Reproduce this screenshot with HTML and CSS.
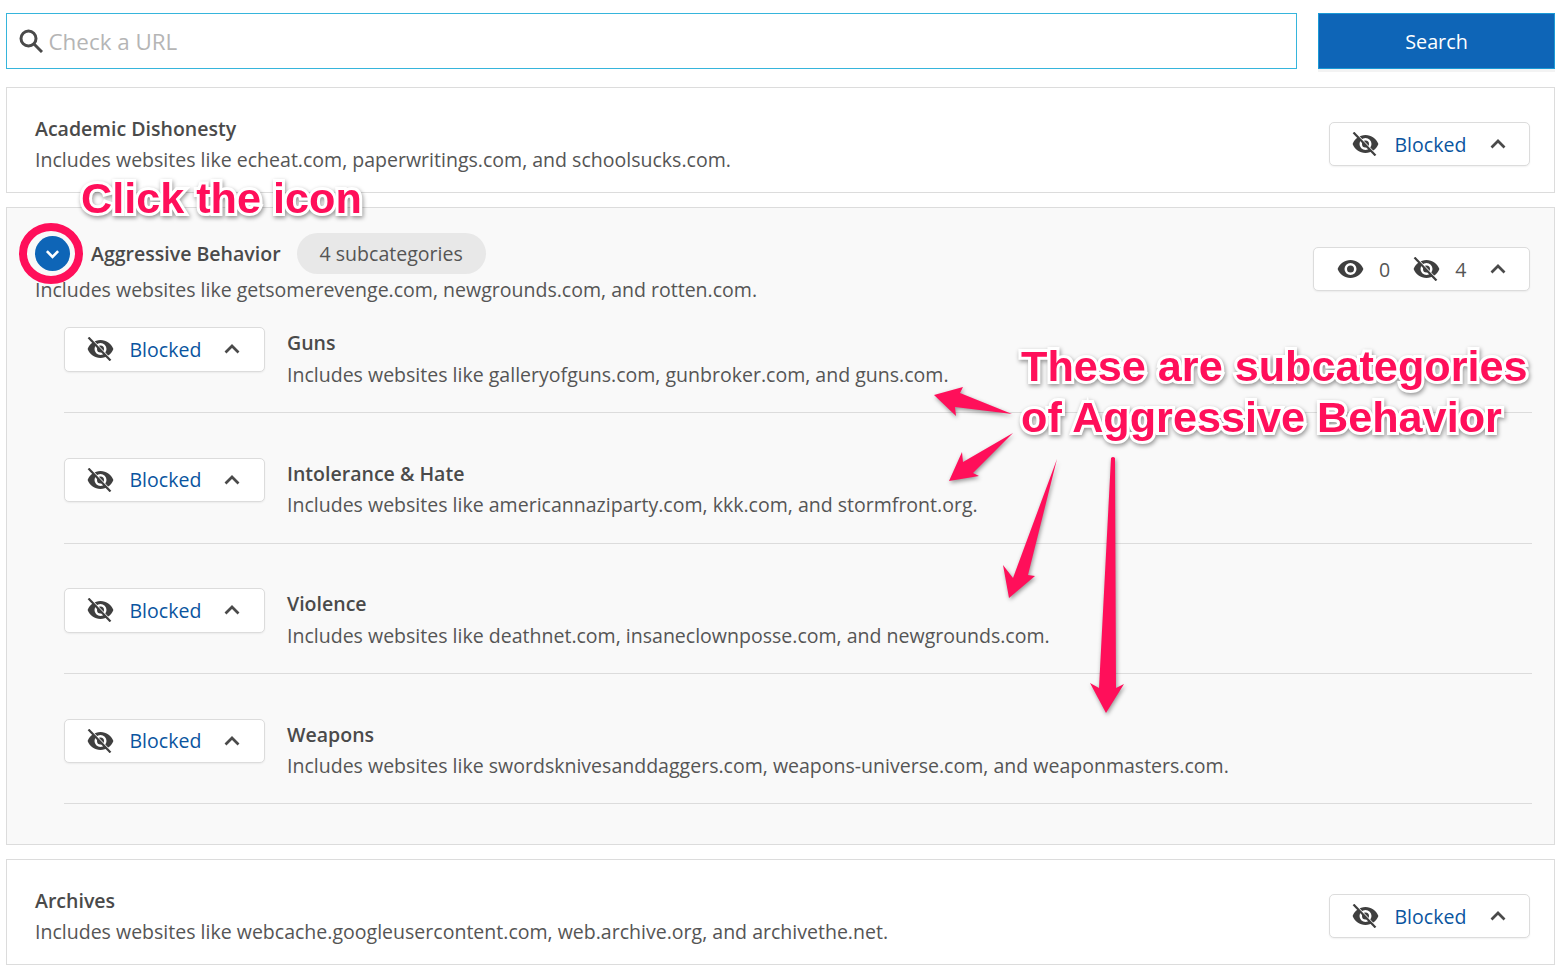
FILE: index.html
```html
<!DOCTYPE html>
<html lang="en">
<head>
    <meta charset="UTF-8">
    <meta name="viewport" content="width=device-width, initial-scale=1.0">
    <title>Category filters</title>
    <link rel="stylesheet" href="styles.css">
</head>
<body>

    <svg class="icon-defs" width="0" height="0" aria-hidden="true">
        <symbol id="eye" viewBox="0 0 27 20">
            <path fill-rule="evenodd" d="M13.500 1C7.600 1 2.800 4.600.6 10c2.200 5.400 7 9 12.900 9s10.700-3.600 12.900-9C24.200 4.600 19.400 1 13.500 1zm0 15a6 6 0 1 1 0-12 6 6 0 0 1 0 12zm0-9.500a3.500 3.500 0 1 0 0 7 3.500 3.500 0 0 0 0-7z"/>
        </symbol>
        <symbol id="eye-off" viewBox="0 0 27 24">
            <path fill-rule="evenodd" d="M13.500 3C7.600 3 2.800 6.600.6 12c2.200 5.400 7 9 12.900 9s10.700-3.600 12.900-9C24.200 6.600 19.400 3 13.500 3zm0 15a6 6 0 1 1 0-12 6 6 0 0 1 0 12zm0-9.500a3.500 3.500 0 1 0 0 7 3.500 3.500 0 0 0 0-7z"/>
            <path class="slash-gap" d="M3 0.500 24 22.500"/>
            <path class="slash" d="M1.500 0.500 23.500 23.500"/>
        </symbol>
        <symbol id="chevron" viewBox="0 0 16 10">
            <path d="M1.500 8.500 8 2l6.500 6.500" fill="none" stroke="currentColor" stroke-width="2.700"/>
        </symbol>
    </svg>

    <div class="search-row">
        <div class="search-box">
            <svg class="search-icon" viewBox="0 0 24 24"><circle cx="9.500" cy="9.500" r="7.500"/><path d="M15 15l8 8"/></svg>
            <input type="text" placeholder="Check a URL">
        </div>
        <button class="search-btn">Search</button>
    </div>

    <div class="card">
        <div class="card-text">
            <h3>Academic Dishonesty</h3>
            <p>Includes websites like echeat.com, paperwritings.com, and schoolsucks.com.</p>
        </div>
        <div class="status-btn">
            <svg class="eye-icon"><use href="#eye-off"/></svg>
            <span class="status-label">Blocked</span>
            <svg class="chevron-icon"><use href="#chevron"/></svg>
        </div>
    </div>

    <div class="card card-open">
        <div class="open-head">
            <div class="card-text">
                <div class="title-row">
                    <span class="toggle"><svg viewBox="0 0 16 10"><path d="M2 2l6 6 6-6"/></svg></span>
                    <h3>Aggressive Behavior</h3>
                    <span class="pill">4 subcategories</span>
                </div>
                <p>Includes websites like getsomerevenge.com, newgrounds.com, and rotten.com.</p>
            </div>
            <div class="status-btn counts-btn">
                <svg class="eye-icon eye-on"><use href="#eye"/></svg>
                <span class="count">0</span>
                <svg class="eye-icon"><use href="#eye-off"/></svg>
                <span class="count">4</span>
                <svg class="chevron-icon"><use href="#chevron"/></svg>
            </div>
        </div>

        <div class="sub-row">
            <div class="status-btn sub-btn">
                <svg class="eye-icon"><use href="#eye-off"/></svg>
                <span class="status-label">Blocked</span>
                <svg class="chevron-icon"><use href="#chevron"/></svg>
            </div>
            <div class="card-text">
                <h3>Guns</h3>
                <p>Includes websites like galleryofguns.com, gunbroker.com, and guns.com.</p>
            </div>
        </div>
        <div class="sub-row">
            <div class="status-btn sub-btn">
                <svg class="eye-icon"><use href="#eye-off"/></svg>
                <span class="status-label">Blocked</span>
                <svg class="chevron-icon"><use href="#chevron"/></svg>
            </div>
            <div class="card-text">
                <h3>Intolerance &amp; Hate</h3>
                <p>Includes websites like americannaziparty.com, kkk.com, and stormfront.org.</p>
            </div>
        </div>
        <div class="sub-row">
            <div class="status-btn sub-btn">
                <svg class="eye-icon"><use href="#eye-off"/></svg>
                <span class="status-label">Blocked</span>
                <svg class="chevron-icon"><use href="#chevron"/></svg>
            </div>
            <div class="card-text">
                <h3>Violence</h3>
                <p>Includes websites like deathnet.com, insaneclownposse.com, and newgrounds.com.</p>
            </div>
        </div>
        <div class="sub-row">
            <div class="status-btn sub-btn">
                <svg class="eye-icon"><use href="#eye-off"/></svg>
                <span class="status-label">Blocked</span>
                <svg class="chevron-icon"><use href="#chevron"/></svg>
            </div>
            <div class="card-text">
                <h3>Weapons</h3>
                <p>Includes websites like swordsknivesanddaggers.com, weapons-universe.com, and weaponmasters.com.</p>
            </div>
        </div>
    </div>

    <div class="card">
        <div class="card-text">
            <h3>Archives</h3>
            <p>Includes websites like webcache.googleusercontent.com, web.archive.org, and archivethe.net.</p>
        </div>
        <div class="status-btn">
            <svg class="eye-icon"><use href="#eye-off"/></svg>
            <span class="status-label">Blocked</span>
            <svg class="chevron-icon"><use href="#chevron"/></svg>
        </div>
    </div>

    <!-- Annotations drawn over the page -->
    <svg class="marks" width="1566" height="974" viewBox="0 0 1566 974">
        <ellipse class="ring" cx="51" cy="253.500" rx="28" ry="26.500"/>
        <path class="arrow" d="M1012 414 960 393 963 387 934 395 956 416 955 407z"/>
        <path class="arrow" d="M1013 433 973 473 979 476 949 481 962 452 963 462z"/>
        <path class="arrow" d="M1057 459 1028 575 1035 576 1009 598 1003 565 1013 578z"/>
        <path class="arrow" d="M1111 458q2-2 4 0L1116 688 1124 684 1106 713 1090 683 1099 688z"/>
    </svg>
    <div class="note note-click">Click the icon</div>
    <div class="note note-subs">These are subcategories<br>of Aggressive Behavior</div>

</body>
</html>
```

FILE: styles.css
```css
* {
    box-sizing: border-box;
}
body {
    font-family: 'Open Sans', sans-serif;
    font-size: 19.550px;
    line-height: 31px;
    color: #555555;
    background-color: #ffffff;
    margin: 0;
    padding: 13px 11px 0 6px;
    position: relative;
}
h3 {
    font-size: 19.550px;
    font-weight: 600;
    color: #4a4a4a;
    margin: 0;
}
p {
    margin: 0;
}
.icon-defs {
    position: absolute;
}
/* Search */
.search-row {
    display: flex;
    gap: 21px;
    margin-bottom: 18px;
}
.search-box {
    flex: 1;
    height: 56px;
    display: flex;
    align-items: center;
    gap: 5.500px;
    padding-left: 12px;
    border: 1px solid #36b5dc;
}
.search-icon {
    width: 24px;
    height: 24px;
    fill: none;
    stroke: #4a4a4a;
    stroke-width: 3;
}
.search-box input {
    flex: 1;
    border: none;
    outline: none;
    background: none;
    font-family: inherit;
    font-size: 22.400px;
    padding: 0;
}
.search-box input::placeholder {
    color: #b5b5b5;
    opacity: 1;
}
.search-btn {
    width: 237px;
    height: 56px;
    background-color: #0e65b7;
    border: 1px solid #1a9ad6;
    box-shadow: 0 3px 0 #f3f3f3;
    color: #ffffff;
    font-family: inherit;
    font-size: 19.800px;
}
/* Cards */
.card {
    display: flex;
    justify-content: space-between;
    align-items: flex-start;
    height: 106px;
    padding: 25px 24px 0 28px;
    border: 1px solid #dcdcdc;
    margin-bottom: 14px;
}
.card-open {
    display: block;
    height: 638px;
    padding: 25px 22px 0 28px;
    background-color: #f9f9f9;
}
.open-head {
    display: flex;
    justify-content: space-between;
    align-items: flex-start;
    padding-right: 2px;
}
.title-row {
    display: flex;
    align-items: center;
    height: 41px;
}
.toggle {
    width: 35px;
    height: 35px;
    margin-right: 21px;
    border-radius: 50%;
    background-color: #0e65b7;
    display: flex;
    align-items: center;
    justify-content: center;
}
.toggle svg {
    width: 15px;
    height: 10px;
    fill: none;
    stroke: #ffffff;
    stroke-width: 2.800;
}
.pill {
    height: 41px;
    margin-left: 16px;
    padding: 0 23px;
    border-radius: 21px;
    background-color: #e8e8e8;
    display: flex;
    align-items: center;
}
/* Status dropdown */
.status-btn {
    flex-shrink: 0;
    width: 201px;
    height: 44px;
    margin-top: 9px;
    padding: 0 23px 0 22px;
    display: flex;
    align-items: center;
    background-color: #ffffff;
    border: 1px solid #dcdcdc;
    border-radius: 5px;
    box-shadow: 0 1px 2px rgba(0, 0, 0, 0.06);
}
.eye-icon {
    width: 27px;
    height: 24px;
    fill: #3f3f3f;
    flex-shrink: 0;
}
.eye-on {
    height: 20px;
}
.slash {
    fill: none;
    stroke: #3f3f3f;
    stroke-width: 2.200;
}
.slash-gap {
    fill: none;
    stroke: #ffffff;
    stroke-width: 1.500;
}
.status-label {
    color: #0a55a0;
    margin-left: 15.500px;
}
.chevron-icon {
    width: 16px;
    height: 10px;
    margin-left: auto;
    color: #4a4a4a;
    flex-shrink: 0;
}
.counts-btn {
    width: 217px;
    margin-top: 14px;
    padding-left: 23px;
}
.count {
    margin: 0 23px 0 15px;
}
.count + .eye-icon + .count {
    margin-right: 0;
}
/* Subcategories */
.sub-row {
    display: flex;
    align-items: flex-start;
    height: 130.330px;
    margin-left: 29px;
    padding-top: 44.500px;
    border-bottom: 1px solid #dcdcdc;
    line-height: 31.500px;
}
.open-head + .sub-row {
    height: 108.400px;
    padding-top: 22px;
}
.sub-btn {
    height: 44.500px;
    margin: 0 22px 0 0;
    padding-right: 24px;
}
/* Annotations */
.marks {
    position: absolute;
    top: 0;
    left: 0;
    pointer-events: none;
}
.ring {
    fill: none;
    stroke: #ff0f5a;
    stroke-width: 8;
}
.arrow {
    fill: #ff0f5a;
    filter: drop-shadow(1px 2px 2px rgba(0, 0, 0, 0.4));
}
.note {
    position: absolute;
    font-family: 'Liberation Sans', Arial, sans-serif;
    font-size: 43.200px;
    font-weight: 700;
    line-height: 51px;
    white-space: nowrap;
    color: #ff0f5a;
    -webkit-text-stroke: 6px #ffffff;
    paint-order: stroke fill;
    filter: drop-shadow(1px 2px 2px rgba(0, 0, 0, 0.4));
}
.note-click {
    top: 173px;
    left: 81px;
}
.note-subs {
    top: 341px;
    left: 1021px;
}
```
